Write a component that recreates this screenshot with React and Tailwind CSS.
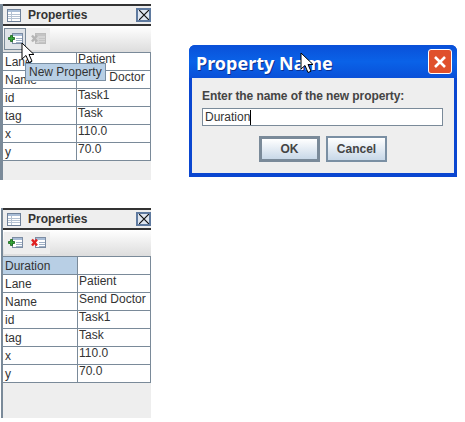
const ROWS_TOP = [['Lane', 'Patient'], ['Name', 'Send Doctor'], ['id', 'Task1'], ['tag', 'Task'], ['x', '110.0'], ['y', '70.0']]
const ROWS_BOTTOM = [['Duration', ''], ...ROWS_TOP]

function TableIcon() {
  return (
    <svg width="14" height="13" viewBox="0 0 14 13">
      <rect x="0.5" y="0.5" width="13" height="12" fill="#fff" stroke="#6f8199" />
      <rect x="1" y="1" width="12" height="2" fill="#a9bdd6" />
      <path d="M1 5.5h12M1 7.5h12M1 9.5h12" stroke="#b5c2d2" />
      <path d="M4.5 3v9" stroke="#b5c2d2" />
    </svg>
  )
}

function AddIcon() {
  return (
    <svg width="15" height="12" viewBox="0 0 15 12">
      <rect x="4.5" y="0.5" width="10" height="10" fill="#fff" stroke="#7c8ca3" />
      <rect x="5" y="1" width="9" height="2" fill="#a9bdd6" />
      <path d="M8 5.5h6M8 7.5h6M8 9.5h6" stroke="#9fb0c6" />
      <path d="M2.5 2.5h2v2h2v2h-2v2h-2v-2h-2v-2h2z" fill="#35a835" stroke="#16601a" strokeWidth="0.8" />
    </svg>
  )
}

function DeleteIcon({ disabled }) {
  const mark = disabled ? '#b5b5b5' : '#e02020'
  return (
    <svg width="15" height="12" viewBox="0 0 15 12">
      <rect x="4.5" y="0.5" width="10" height="10" fill={disabled ? '#d4d4d4' : '#fff'} stroke={disabled ? '#bdbdbd' : '#7c8ca3'} />
      <rect x="5" y="1" width="9" height="2" fill={disabled ? '#c4c4c4' : '#a9bdd6'} />
      <path d="M8 5.5h6M8 7.5h6M8 9.5h6" stroke={disabled ? '#c4c4c4' : '#9fb0c6'} />
      <path d="M1 2.5l5 6M6 2.5l-5 6" stroke={mark} strokeWidth="2.4" />
    </svg>
  )
}

function Cursor({ className }) {
  return (
    <svg width="14" height="22" viewBox="0 0 14 22" className={className}>
      <path d="M1 1v16l4-3.5 3 7 3-1.3-3-6.7h5z" fill="#fff" stroke="#000" strokeWidth="1" />
    </svg>
  )
}

function PropertiesPanel({ rows, height, firstCol, active, deleteDisabled, inset, children }) {
  return (
    <div className={`relative flex flex-col bg-[#eeeeee] border-[#7a8a99] ${inset ? 'ml-[1px] w-[150px] border-l-2' : 'w-[151px] border-l-[3px]'}`} style={{ height }}>
      <div className="flex items-center h-[22px] border-y-2 border-[#333333] bg-[#eeeeee] pl-[4px]">
        <TableIcon />
        <span className="ml-[7px] text-[12px] font-bold text-[#333333]">Properties</span>
        <span className="ml-auto flex items-center justify-center w-[15px] h-[14px] bg-[#dfe6f0] border-2 border-[#5f7a9f]">
          <svg width="10" height="10" viewBox="0 0 10 10">
            <path d="M0 0l10 10M10 0L0 10" stroke="#111" strokeWidth="1.2" />
          </svg>
        </span>
      </div>
      <div className="flex items-center h-[26px] bg-gradient-to-b from-white to-[#dddddd]">
        <div className={`flex items-center justify-center w-[22px] h-[22px] ml-[1px] ${active ? 'border border-[#7a8a99] bg-[#dfe3e8]' : 'bg-[#eeeeee]'}`}>
          <AddIcon />
        </div>
        <div className="flex items-center justify-center w-[24px] h-[22px] bg-[#eeeeee]">
          <DeleteIcon disabled={deleteDisabled} />
        </div>
      </div>
      <div className="border-t border-r border-[#7a8a99] w-[148px] bg-white text-[12px] text-[#333333]">
        {rows.map(([k, v]) => (
          <div key={k} className="flex h-[18px] border-b border-[#7a8a99]">
            <div className={`border-r border-[#7a8a99] pl-[2px] leading-[18px] ${k === 'Duration' ? 'bg-[#b8cfe5]' : ''}`} style={{ width: firstCol }}>{k}</div>
            <div className="flex-1 pl-[1px] leading-[13px] whitespace-nowrap overflow-hidden">{v}</div>
          </div>
        ))}
      </div>
      {children}
    </div>
  )
}

function DialogButton({ label, primary }) {
  return (
    <button className={`w-[61px] h-[26px] text-[12px] font-bold text-[#444444] bg-gradient-to-b from-white to-[#c8d8e8] ${primary ? 'border-[3px] border-[#7a8a99]' : 'border-2 border-[#7a8fa3]'}`}>
      {label}
    </button>
  )
}

export default function App() {
  return (
    <div className="flex w-[465px] h-[422px] bg-white overflow-hidden font-['Liberation_Sans',sans-serif]">
      <div className="flex flex-col gap-[28px] pt-[4px] w-[151px] shrink-0">
        <PropertiesPanel rows={ROWS_TOP} height={176} firstCol={74} active deleteDisabled>
          <Cursor className="absolute left-[18px] top-[38px] z-20" />
          <div className="absolute left-[22px] top-[59px] z-10 h-[18px] px-[3px] bg-[#b8cfe5] border border-[#7a8fa3] text-[12px] leading-[16px] text-[#333333] whitespace-nowrap">New Property</div>
        </PropertiesPanel>
        <PropertiesPanel rows={ROWS_BOTTOM} height={210} firstCol={75} inset />
      </div>
      <div className="relative mt-[45px] ml-[38px] w-[268px] h-[132px] flex flex-col rounded-t-[6px] bg-[#0a46d0] px-[3px] pb-[4px]">
        <div className="flex items-center justify-between h-[33px] shrink-0 bg-gradient-to-b from-[#0a50d8] via-[#0a62e8] to-[#0a50d8] -mx-[3px] pl-[7px] pr-[5px] rounded-t-[6px]">
          <span className="mt-[3px] text-[18px] font-bold text-white font-['Noto_Sans',sans-serif] [text-shadow:1px_1px_#0a2f90]">Property Name</span>
          <span className="flex items-center justify-center w-[24px] h-[25px] rounded-[3px] bg-[#e0502c] border border-white">
            <svg width="14" height="14" viewBox="0 0 14 14">
              <path d="M2 2l10 10M12 2L2 12" stroke="#fff" strokeWidth="2.6" />
            </svg>
          </span>
        </div>
        <div className="flex-1 flex flex-col bg-[#eeeeee] px-[10px] pt-[10px]">
          <p className="text-[12px] font-bold leading-[16px] text-[#444444] tracking-[-0.09px] whitespace-nowrap">Enter the name of the new property:</p>
          <div className="mt-[4px] flex items-center h-[18px] w-[241px] bg-white border border-[#7a8a99] pl-[2px] text-[12px] text-[#333333]">
            Duration<span className="w-px h-[15px] bg-black" />
          </div>
          <div className="mt-[10px] flex justify-center gap-[6px]">
            <DialogButton label="OK" primary />
            <DialogButton label="Cancel" />
          </div>
        </div>
        <Cursor className="absolute left-[111px] top-[7px]" />
      </div>
    </div>
  )
}
